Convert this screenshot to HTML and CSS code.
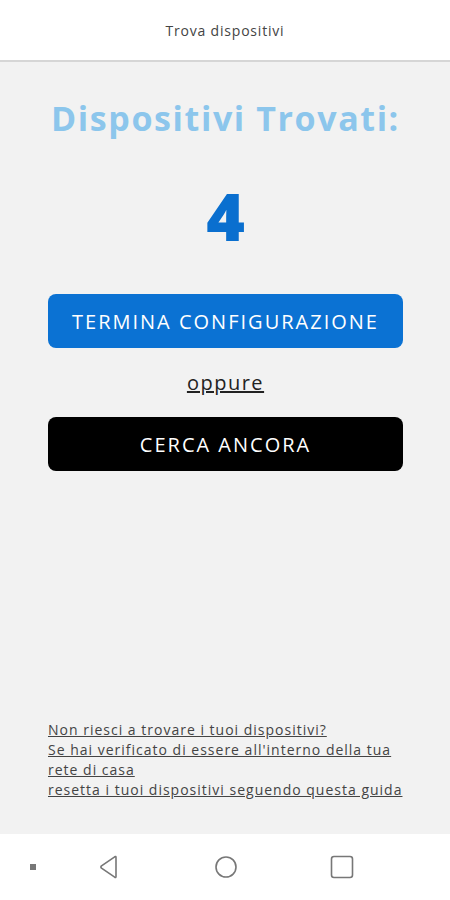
FILE: index.html
```html
<!DOCTYPE html>
<html lang="it">
<head>
    <meta charset="UTF-8" />
    <title>Trova dispositivi</title>
    <link rel="stylesheet" href="styles.css">
</head>
<body>
    <div class="schermo">
        <header class="barra-titolo">Trova dispositivi</header>

        <main class="contenuto">
            <h1 class="titolo">Dispositivi Trovati:</h1>
            <p class="numero">4</p>

            <button type="button" class="btn btn-blu">TERMINA CONFIGURAZIONE</button>
            <a href="#" class="oppure">oppure</a>
            <button type="button" class="btn btn-nero">CERCA ANCORA</button>

            <div class="aiuto">
                <a href="#">Non riesci a trovare i tuoi dispositivi?</a>
                <a href="#">Se hai verificato di essere all'interno della tua rete di casa</a>
                <a href="#">resetta i tuoi dispositivi seguendo questa guida</a>
            </div>
        </main>

        <nav class="barra-nav">
            <span class="nav-punto"></span>
            <svg class="nav-icona" width="24" height="24" viewBox="0 0 24 24">
                <path d="M18 2.5 L18 21.5 Q18 23 16.7 22.2 L3.5 13.2 Q2.3 12 3.5 10.8 L16.7 1.8 Q18 1 18 2.5 Z" fill="none" stroke="#777" stroke-width="1.6" stroke-linejoin="round"/>
            </svg>
            <svg class="nav-icona" width="24" height="24" viewBox="0 0 24 24">
                <circle cx="12" cy="12" r="10" fill="none" stroke="#777" stroke-width="1.6"/>
            </svg>
            <svg class="nav-icona" width="24" height="24" viewBox="0 0 24 24">
                <rect x="1.5" y="1.5" width="21" height="21" rx="2.5" fill="none" stroke="#777" stroke-width="1.6"/>
            </svg>
        </nav>
    </div>
</body>
</html>
```

FILE: styles.css
```css
body {
    margin: 0;
    font-family: "Open Sans", "Liberation Sans", sans-serif;
    background-color: #fff;
    color: #222;
}

.schermo {
    width: 450px;
    height: 900px;
    display: flex;
    flex-direction: column;
}

.barra-titolo {
    height: 62px;
    box-sizing: border-box;
    display: flex;
    align-items: center;
    justify-content: center;
    font-size: 14px;
    letter-spacing: 0.8px;
    color: #444;
    background-color: #fff;
    border-bottom: 2px solid #d6d6d6;
}

.contenuto {
    flex: 1;
    background-color: #f2f2f2;
    display: flex;
    flex-direction: column;
    align-items: center;
    padding: 0 47px 34px 48px;
}

.titolo {
    margin: 33px 0 0;
    font-size: 34px;
    font-weight: 700;
    color: #8cc6ec;
    letter-spacing: 1.6px;
}

.numero {
    margin: 41px 0 0;
    font-size: 66px;
    font-weight: 800;
    line-height: 1;
    color: #0a6fcf;
}

.btn {
    width: 100%;
    height: 54px;
    border: none;
    border-radius: 8px;
    font-family: inherit;
    font-size: 20px;
    letter-spacing: 2px;
    color: #fff;
    cursor: pointer;
}

.btn-blu {
    margin-top: 46px;
    background-color: #0b72d3;
}

.btn-nero {
    background-color: #000;
}

.oppure {
    margin: 21px 0 21px;
    font-size: 20px;
    letter-spacing: 1.5px;
    color: #222;
    text-decoration: underline;
}

.aiuto {
    margin-top: auto;
    align-self: stretch;
    display: flex;
    flex-direction: column;
}

.aiuto a {
    font-size: 14px;
    letter-spacing: 1px;
    line-height: 20px;
    color: #444;
    text-decoration: underline;
}

.barra-nav {
    height: 66px;
    display: flex;
    align-items: center;
    background-color: #fff;
}

.nav-punto {
    width: 6px;
    height: 6px;
    background-color: #777;
    margin: 0 62px 0 30px;
}

.nav-icona {
    margin-right: 92px;
}
```
